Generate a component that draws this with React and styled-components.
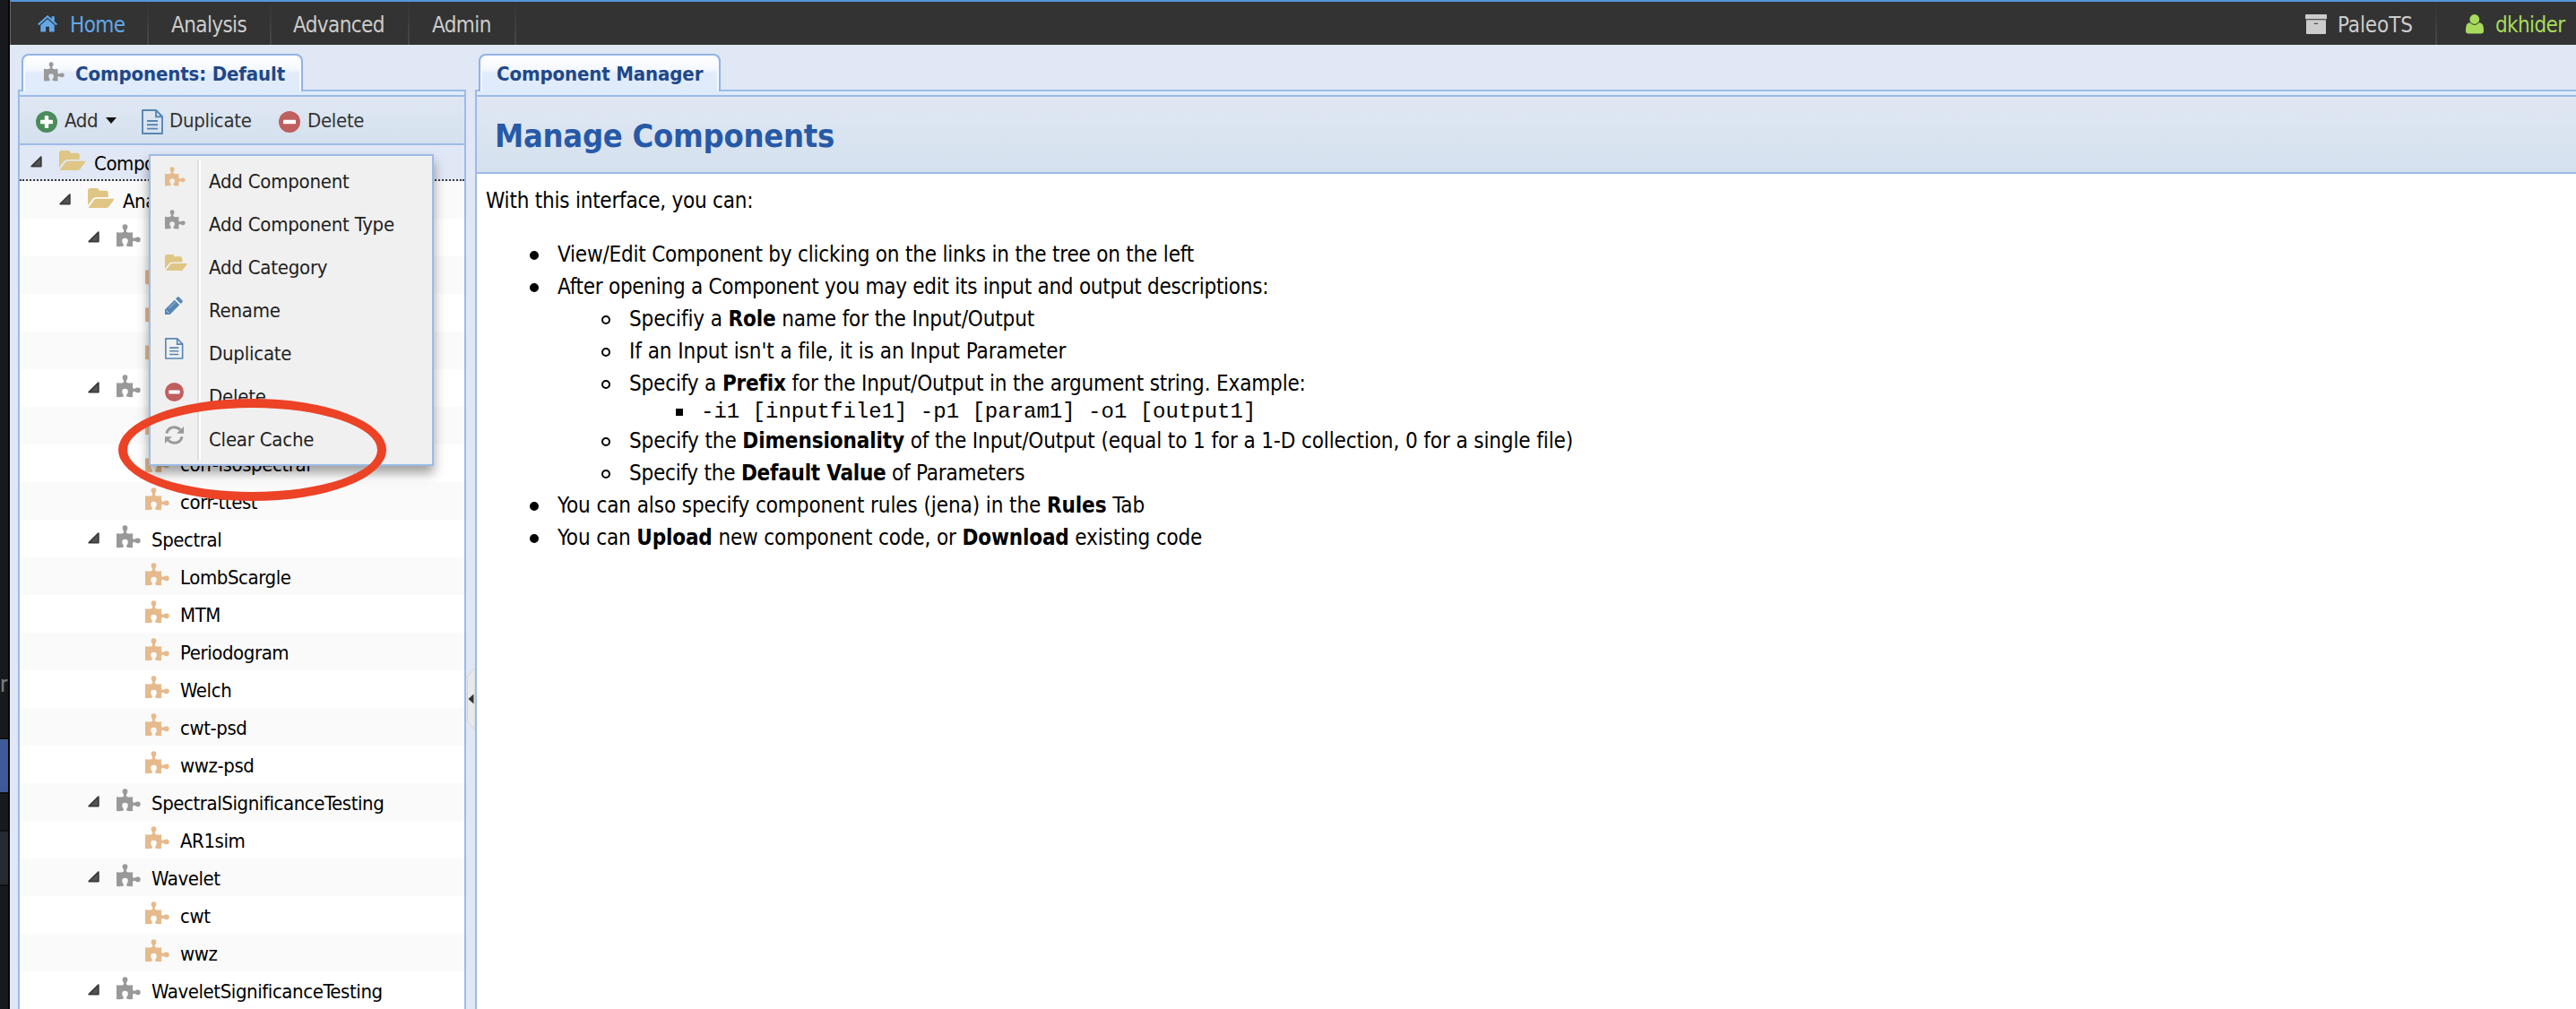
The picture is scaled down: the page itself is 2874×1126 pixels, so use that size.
import React from "react";
import styled, { createGlobalStyle, css } from "styled-components";

const line = "#9dbbe6";
const chrome = "#e0e7f5";
const ui = '"DejaVu Sans Condensed", "DejaVu Sans", sans-serif';

const GlobalStyle = createGlobalStyle`
  *, *::before { box-sizing: border-box; }
  body { margin: 0; background: ${chrome}; font-family: ${ui}; overflow: hidden; }
  svg { display: block; flex: none; }
`;

/* ---------- icons ---------- */

const Puzzle = ({ color = "#999", w = 27 }) => (
  <svg width={w} height={(w * 25.3) / 27} viewBox="0 0 27 25.3">
    <path
      fill={color}
      d="M0 9.2Q4 9.9 7 9.2Q8.8 8.6 8 6.6Q6.6 5 6.6 3.2A2.9 2.9 0 1 1 12.4 3.2Q12.4 5 11 6.6Q10.2 8.6 12 9.2Q15 9.9 18.3 9.2Q17.7 12 18.2 14.6Q18.9 16.6 20.6 15.6Q22 14.6 23.9 14.6A2.8 2.8 0 1 1 23.9 20.2Q22 20.2 20.6 19Q18.9 18 18.2 20Q17.7 22.5 18.3 25Q14.5 25.4 11.8 24.8Q10.4 24 11.4 22.4Q12.8 21 12.8 19A3.2 3.2 0 1 0 6.2 19Q6.2 21 7.6 22.4Q8.6 24 7.2 24.8Q4 25.4 0 25Z"
    />
  </svg>
);

const Folder = ({ w = 29.5 }) => (
  <svg width={w} height={(w * 22) / 29.5} viewBox="0 0 29.5 22">
    <g fill="#dfc684">
      <path d="M0 3Q0 0 3 0H9.5Q12.4 0 12.6 2.8H20Q22.8 2.8 22.8 5.6V10H9.5Q7 10 5.5 11.8L0 19Z" />
      <path d="M1 21.2L7.2 13Q8.2 11.8 9.8 11.8H28.6Q29.8 11.8 29 13L23.5 20.4Q22.3 22 20.5 22H1.6Q.6 22 1 21.2Z" />
    </g>
  </svg>
);

const Home = () => (
  <svg width="22" height="20" viewBox="0 0 22 20">
    <g fill="#62a7e8">
      <path d="M0 9.8L11 0L15.6 4V1.2H18.8V6.9L22 9.8L20.6 11.2L11 2.8L1.4 11.2Z" />
      <path d="M3.3 11L11 4.3L18.7 11V18.6H12.9V12.8H9.1V18.6H3.3Z" />
    </g>
  </svg>
);

const Archive = () => (
  <svg width="24" height="22" viewBox="0 0 24 22">
    <path fill="#ccc" d="M.8 0H23.2Q24 0 24 .8V5.3H0V.8Q0 0 .8 0Z" />
    <path fill="#ccc" fillRule="evenodd" d="M1 6.3H23V21.2Q23 22 22.2 22H1.8Q1 22 1 21.2ZM9.8 9.7V10.7H14.2V9.7Z" />
  </svg>
);

const User = () => (
  <svg width="20" height="22" viewBox="0 0 20 22">
    <g fill="#a8db5c">
      <circle cx="9.8" cy="5.5" r="5.4" />
      <path d="M4.8 9.3Q7 11.9 9.8 11.9T14.8 9.3Q20 9.6 20 16.5V18.5Q20 21.5 17 21.5H3Q0 21.5 0 18.5V16.5Q0 9.6 4.8 9.3Z" />
    </g>
  </svg>
);

const Sign = ({ color, plus, w = 24 }) => (
  <svg width={w} height={w} viewBox="0 0 24 24">
    <circle cx="12" cy="12" r="12" fill={color} />
    <rect x="5" y="9.8" width="14" height="4.4" rx=".8" fill="#fff" />
    {plus && <rect x="9.8" y="5" width="4.4" height="14" rx=".8" fill="#fff" />}
  </svg>
);

const Doc = ({ w = 24 }) => (
  <svg width={w} height={(w * 28) / 24} viewBox="0 0 24 28" fill="none" stroke="#5686b4" strokeWidth="1.9">
    <path strokeLinejoin="round" d="M1 1H16L23 8V27H1Z" />
    <path d="M16 1V8.3H23M6 13H18M6 17.3H18M6 21.6H18" />
  </svg>
);

const Pencil = () => (
  <svg width="20" height="20" viewBox="0 0 20 20">
    <path fill="#5686b4" d="M0 14.4L10.7 3.7L16.3 9.3L5.6 20H0ZM12 2.4L13.8.6Q14.8-.3 15.8.6L19.4 4.2Q20.3 5.2 19.4 6.2L17.6 8Z" />
    <path d="M4.6 13L11.6 6" stroke="#a9c3da" strokeWidth="1" />
    <path d="M1.8 15.3L4.7 18.2H3.2V16.8H1.8Z" fill="#f0f0f0" />
  </svg>
);

const Refresh = () => (
  <svg width="21" height="21" viewBox="0 0 21 21">
    <g fill="none" stroke="#999" strokeWidth="3">
      <path d="M1.8 8.6C3 4.4 6.4 1.7 10.4 1.7C13.3 1.7 15.6 3 17.2 4.9" />
      <path d="M19.2 12.4C18 16.6 14.6 19.3 10.6 19.3C7.7 19.3 5.4 18 3.8 16.1" />
    </g>
    <path fill="#999" d="M21 1V8.8H13.2ZM0 20V12.2H7.8Z" />
  </svg>
);

const Expander = () => (
  <svg width="13" height="13" viewBox="0 0 13 13">
    <path d="M11.8 1.2V11.6H1.2Z" fill="#555" stroke="#3a3a3a" strokeWidth="1.8" strokeLinejoin="round" />
  </svg>
);

/* ---------- page frame ---------- */

const Screen = styled.div`
  position: relative;
  display: flex;
  width: 2874px;
  height: 1126px;
  overflow: hidden;
`;

const Behind = styled.aside`
  display: flex;
  flex-direction: column;
  width: 11px;
  flex: none;
  overflow: hidden;
  background: #18191c;
  border-right: 2px solid #050505;
`;

const BehindBlock = styled.div`
  height: ${(p) => p.$h}px;
  flex: none;
  background: ${(p) => p.$bg || "transparent"};
  border-bottom: ${(p) => (p.$edge ? "2px solid #0f1012" : "0")};
`;

const BehindText = styled.div`
  height: 82px;
  flex: none;
  color: #777b84;
  font: 26px/40px Roboto, sans-serif;
  letter-spacing: -1px;
  border-bottom: 2px solid #0f1012;
`;

const Page = styled.div`
  display: flex;
  flex-direction: column;
  flex: 1;
  min-width: 0;
`;

const NavBar = styled.nav`
  display: flex;
  height: 50px;
  flex: none;
  background: #333;
  border-top: 2px solid #5596d9;
  border-left: 1px solid #666;
`;

const NavItem = styled.div`
  display: flex;
  align-items: center;
  gap: ${(p) => p.$gap || 0}px;
  width: ${(p) => p.$w}px;
  padding: 3px 0 0 ${(p) => p.$pad || 25}px;
  color: ${(p) => p.$color || "#ccc"};
  font-size: 24px;
  letter-spacing: ${(p) => p.$ls ?? -0.6}px;
  white-space: nowrap;
  border-right: 2px solid;
  border-image: ${(p) =>
    p.$last ? "none" : "linear-gradient(#333, #484848) 1"};
  ${(p) => p.$last && css`border-right: 0;`}
  svg { margin-bottom: 2px; }
`;

const NavSpace = styled.div`
  flex: 1;
`;

const Main = styled.main`
  display: flex;
  flex: 1;
  min-height: 0;
  padding: 10px 0 0 9px;
`;

const Panel = styled.section`
  display: flex;
  flex-direction: column;
  ${(p) => (p.$w ? css`width: ${p.$w}px; flex: none;` : css`flex: 1; min-width: 0;`)}
`;

const TabRow = styled.div`
  display: flex;
  height: 40px;
  flex: none;
  padding-left: ${(p) => p.$pad}px;
`;

const Tab = styled.div`
  z-index: 1;
  display: flex;
  align-items: center;
  gap: 12px;
  width: ${(p) => p.$w}px;
  height: 42px;
  padding-left: ${(p) => p.$pad}px;
  border: 2px solid #93b3e2;
  border-bottom: 0;
  border-radius: 8px 8px 0 0;
  background: linear-gradient(#fff, #f5f9fe 38%, #e1ebfb 50%, #dfebfb);
  box-shadow: inset 2px 0 #f6f9fe, inset -2px 0 #f6f9fe;
  color: #204788;
  font-size: 22px;
  font-weight: 700;
  letter-spacing: ${(p) => p.$ls}px;
  white-space: nowrap;
  svg { margin-bottom: 4px; }
`;

const TabStrip = styled.div`
  height: 8px;
  flex: none;
  background: #dfebfb;
  border: 2px solid ${line};
  ${(p) => p.$open && css`border-right: 0;`}
`;

const PanelBody = styled.div`
  display: flex;
  flex-direction: column;
  flex: 1;
  min-height: 0;
  background: #fff;
  border: solid ${line};
  border-width: 0 ${(p) => (p.$open ? 0 : 2)}px 0 2px;
`;

const Toolbar = styled.div`
  display: flex;
  align-items: center;
  height: 54px;
  flex: none;
  padding: 1px 0 0 18px;
  background: linear-gradient(#e0e7f3, #d4e1ee);
  border-bottom: 2px solid ${line};
`;

const ToolButton = styled.div`
  display: flex;
  align-items: center;
  gap: ${(p) => p.$gap}px;
  width: ${(p) => p.$w}px;
  color: #333;
  font-size: 22px;
  letter-spacing: ${(p) => p.$ls ?? -0.3}px;
  svg { margin-top: 3px; }
`;

const Caret = styled.i`
  margin-left: 1px;
  border: solid transparent;
  border-width: 7px 6px 0;
  border-top-color: #111;
`;

const Splitter = styled.div`
  display: flex;
  width: 10px;
  flex: none;
  padding: 685px 0 0 1px;
`;

/* ---------- tree ---------- */

const Tree = styled.div`
  display: flex;
  flex-direction: column;
`;

const TreeRow = styled.div`
  display: flex;
  align-items: center;
  height: 42px;
  flex: none;
  padding-left: ${(p) => 12 + p.$level * 32}px;
  background: ${(p) => (p.$alt ? "#fafafa" : "#fff")};
  color: #000;
  font-size: 22px;
  white-space: nowrap;
  ${(p) =>
    p.$selected &&
    css`
      height: 40px;
      background: ${chrome};
      border-bottom: 2px dotted #3a3a3a;
    `}
`;

const ArrowSlot = styled.span`
  width: 32px;
  flex: none;
  padding-bottom: 1px;
`;

const IconSlot = styled.span`
  width: 39px;
  flex: none;
  padding-bottom: 4px;
`;

const TreeLabel = styled.span`
  padding-top: 2px;
  letter-spacing: -0.42px;
`;

/* ---------- context menu ---------- */

const Menu = styled.div`
  position: absolute;
  left: 166px;
  top: 172px;
  width: 318px;
  height: 348px;
  padding: 4px 0;
  border: 2px solid ${line};
  background: #f0f0f0;
  box-shadow: 0 8px 12px rgba(0, 0, 0, 0.38);
`;

const MenuList = styled.div`
  background: linear-gradient(to right, #e0e0e0 2px, #fff 2px) 52px 0 / 4px 100% no-repeat;
`;

const MenuItem = styled.div`
  display: flex;
  height: 48px;
  padding-left: 16px;
  color: #222;
  font-size: 22px;
  line-height: 49px;
  letter-spacing: -0.22px;
  white-space: nowrap;
`;

const MenuIcon = styled.span`
  display: flex;
  align-items: center;
  width: 49px;
  height: 38px;
`;

const Ring = styled.div`
  position: absolute;
  left: 132px;
  top: 445px;
  width: 299px;
  height: 114px;
  border: 10px solid #ec4226;
  border-radius: 50%;
`;

/* ---------- document ---------- */

const TitleBar = styled.header`
  display: flex;
  align-items: center;
  height: 86px;
  flex: none;
  padding: 3px 0 0 20px;
  background: linear-gradient(#e0e7f3, #d4e1ee);
  border-bottom: 2px solid ${line};
  color: #2759a7;
  font-size: 36px;
  font-weight: 700;
  letter-spacing: -0.27px;
`;

const Article = styled.div`
  padding: 12px 0 0 10px;
  font-size: 24px;
  line-height: 36px;
  letter-spacing: -0.22px;
  color: #000;
  white-space: nowrap;
`;

const List = styled.ul`
  margin: ${(p) => (p.$top ? "24px 0 0" : 0)};
  padding: 0 0 0 80px;
  list-style: none;
`;

const Point = styled.li`
  letter-spacing: ${(p) => p.$ls ?? -0.2}px;
  &::before {
    content: "";
    display: inline-block;
    width: 10px;
    height: 10px;
    margin: 0 21px 0 -31px;
    vertical-align: 2px;
    border-radius: 50%;
    border: 2px solid #000;
    background: ${(p) => (p.$hollow ? "transparent" : "#000")};
  }
`;

const CodePoint = styled.li`
  height: 28px;
  font: 24px/27px "Liberation Mono", monospace;
  letter-spacing: 0;
  &::before {
    content: "";
    display: inline-block;
    width: 8px;
    height: 8px;
    margin: 0 20px 0 -28px;
    vertical-align: 2px;
    background: #000;
  }
`;

const rows = [
  [0, "folder", "Components"],
  [1, "folder", "Analysis"],
  [2, "type", ""],
  [3, "item", ""],
  [3, "item", ""],
  [3, "item", ""],
  [2, "type", ""],
  [3, "item", ""],
  [3, "item", "corr-isospectral"],
  [3, "item", "corr-ttest"],
  [2, "type", "Spectral"],
  [3, "item", "LombScargle"],
  [3, "item", "MTM"],
  [3, "item", "Periodogram"],
  [3, "item", "Welch"],
  [3, "item", "cwt-psd"],
  [3, "item", "wwz-psd"],
  [2, "type", "SpectralSignificanceTesting"],
  [3, "item", "AR1sim"],
  [2, "type", "Wavelet"],
  [3, "item", "cwt"],
  [3, "item", "wwz"],
  [2, "type", "WaveletSignificanceTesting"],
];

const menu = [
  ["Add Component", <Puzzle color="#e6ba8c" w={23} />],
  ["Add Component Type", <Puzzle w={23} />],
  ["Add Category", <Folder w={25} />],
  ["Rename", <Pencil />],
  ["Duplicate", <Doc w={20.5} />],
  ["Delete", <Sign color="#bf5f5f" w={21} />],
  ["Clear Cache", <Refresh />],
];

const treeIcon = {
  folder: <Folder />,
  type: <Puzzle />,
  item: <Puzzle color="#e6ba8c" />,
};

export default function App() {
  return (
    <Screen>
      <GlobalStyle />
      <Behind>
        <BehindBlock $h={743} />
        <BehindText>r</BehindText>
        <BehindBlock $h={61} $bg="#3f5b97" $edge />
        <BehindBlock $h={42} $edge />
        <BehindBlock $h={61} $bg="#272a31" $edge />
      </Behind>
      <Page>
        <NavBar>
          <NavItem $w={154} $pad={30} $gap={14} $color="#62a7e8">
            <Home />
            Home
          </NavItem>
          <NavItem $w={137}>Analysis</NavItem>
          <NavItem $w={154} $pad={24}>Advanced</NavItem>
          <NavItem $w={119}>Admin</NavItem>
          <NavSpace />
          <NavItem $w={171} $pad={24} $gap={12} $ls={-0.1}>
            <Archive />
            PaleoTS
          </NavItem>
          <NavItem $w={155} $pad={32} $gap={13} $color="#a8db5c" $last>
            <User />
            dkhider
          </NavItem>
        </NavBar>
        <Main>
          <Panel $w={500}>
            <TabRow $pad={4}>
              <Tab $w={314} $pad={23} $ls={-0.12}>
                <Puzzle w={23} />
                Components: Default
              </Tab>
            </TabRow>
            <TabStrip />
            <PanelBody>
              <Toolbar>
                <ToolButton $gap={8} $w={118}>
                  <Sign color="#4a8c5c" plus />
                  Add
                  <Caret />
                </ToolButton>
                <ToolButton $gap={7} $w={153}>
                  <Doc />
                  Duplicate
                </ToolButton>
                <ToolButton $gap={8}>
                  <Sign color="#bf5f5f" />
                  Delete
                </ToolButton>
              </Toolbar>
              <Tree>
                {rows.map(([level, kind, label], i) => (
                  <TreeRow key={i} $level={level} $alt={i % 2 === 1} $selected={i === 0}>
                    <ArrowSlot>{kind !== "item" && <Expander />}</ArrowSlot>
                    <IconSlot>{treeIcon[kind]}</IconSlot>
                    <TreeLabel>{label}</TreeLabel>
                  </TreeRow>
                ))}
              </Tree>
            </PanelBody>
          </Panel>
          <Splitter>
            <svg width="9" height="70" viewBox="0 0 9 70">
              <path d="M9 0V70L.5 60V10Z" fill="#e9e9e9" stroke="#d2d2d2" />
              <path d="M7.5 29.5V40.5L1.5 35Z" fill="#333" />
            </svg>
          </Splitter>
          <Panel>
            <TabRow $pad={4}>
              <Tab $w={270} $pad={18} $ls={-0.12}>
                Component Manager
              </Tab>
            </TabRow>
            <TabStrip $open />
            <PanelBody $open>
              <TitleBar>Manage Components</TitleBar>
              <Article>
                With this interface, you can:
                <List $top>
                  <Point>View/Edit Component by clicking on the links in the tree on the left</Point>
                  <Point $ls={-0.27}>After opening a Component you may edit its input and output descriptions:</Point>
                  <List>
                    <Point $hollow $ls={-0.13}>
                      Specifiy a <b>Role</b> name for the Input/Output
                    </Point>
                    <Point $hollow $ls={-0.06}>If an Input isn't a file, it is an Input Parameter</Point>
                    <Point $hollow $ls={-0.16}>
                      Specify a <b>Prefix</b> for the Input/Output in the argument string. Example:
                    </Point>
                    <List>
                      <CodePoint>-i1 [inputfile1] -p1 [param1] -o1 [output1]</CodePoint>
                    </List>
                    <Point $hollow $ls={-0.11}>
                      Specify the <b>Dimensionality</b> of the Input/Output (equal to 1 for a 1-D collection, 0 for a single file)
                    </Point>
                    <Point $hollow $ls={-0.23}>
                      Specify the <b>Default Value</b> of Parameters
                    </Point>
                  </List>
                  <Point $ls={-0.09}>
                    You can also specify component rules (jena) in the <b>Rules</b> Tab
                  </Point>
                  <Point $ls={-0.14}>
                    You can <b>Upload</b> new component code, or <b>Download</b> existing code
                  </Point>
                </List>
              </Article>
            </PanelBody>
          </Panel>
        </Main>
      </Page>
      <Menu>
        <MenuList>
          {menu.map(([label, icon]) => (
            <MenuItem key={label}>
              <MenuIcon>{icon}</MenuIcon>
              {label}
            </MenuItem>
          ))}
        </MenuList>
      </Menu>
      <Ring />
    </Screen>
  );
}
